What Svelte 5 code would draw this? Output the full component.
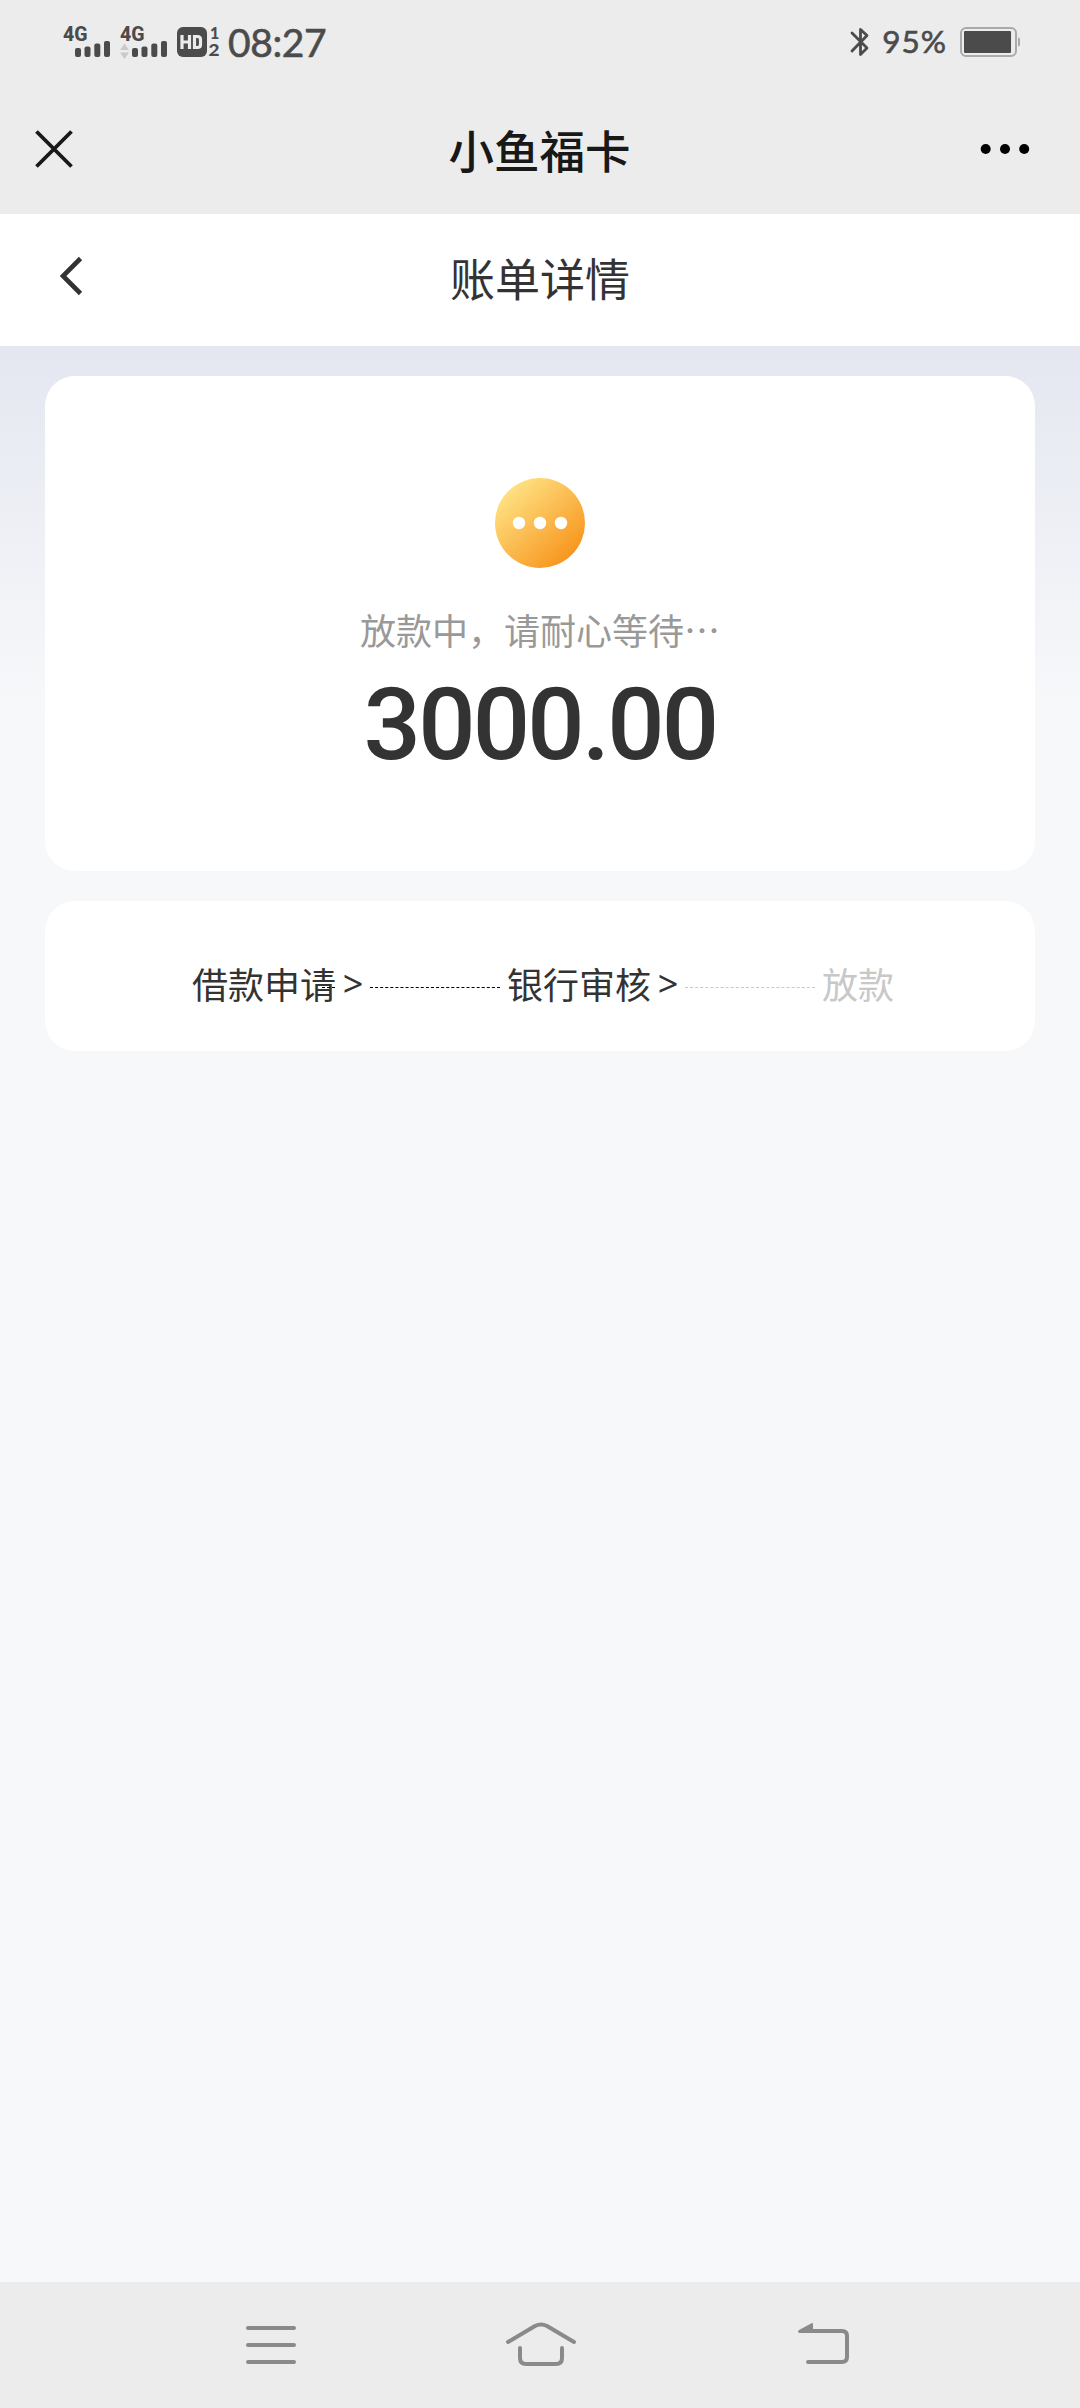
<script lang="ts">
  interface Step {
    label: string;
    done: boolean;
  }

  const time = '08:27';
  const battery = 95;
  const amount = '3000.00';

  const steps: Step[] = [
    { label: '借款申请', done: true },
    { label: '银行审核', done: true },
    { label: '放款', done: false },
  ];
</script>

<div class="screen">
  <div class="status-bar">
    <div class="status-left">
      <svg class="signal" width="48" height="34" viewBox="0 0 48 34">
        <text x="0" y="15" textLength="24.500" lengthAdjust="spacingAndGlyphs">4G</text>
        <rect x="12" y="22" width="6" height="9" rx="2" />
        <rect x="21.5" y="20.5" width="6" height="10.5" rx="2" />
        <rect x="31.300" y="17.500" width="6" height="13.500" rx="2" />
        <rect x="41" y="15" width="6" height="16" rx="2" />
      </svg>
      <svg class="signal second" width="48" height="34" viewBox="0 0 48 34">
        <text x="0" y="15" textLength="24.500" lengthAdjust="spacingAndGlyphs">4G</text>
        <path class="arrows" d="M0 24L4.500 17.500L9 24ZM0 26.500L4.500 33L9 26.500Z" />
        <rect x="12" y="22" width="6" height="9" rx="2" />
        <rect x="21.5" y="20.5" width="6" height="10.5" rx="2" />
        <rect x="31.300" y="17.500" width="6" height="13.500" rx="2" />
        <rect x="41" y="15" width="6" height="16" rx="2" />
      </svg>
      <svg class="hd" width="44" height="34" viewBox="0 0 44 34">
        <rect x="0" y="2" width="30" height="30" rx="6" />
        <path d="M5 10V24M12.500 10V24M5 17H12.500" stroke="#ececec" stroke-width="3.200" fill="none" />
        <path d="M17.500 11.500H20.500Q23.500 11.500 23.500 14.500V19.500Q23.500 22.500 20.500 22.500H17.500Z" stroke="#ececec" stroke-width="3.200" fill="none" />
        <text x="33" y="13.500" class="sim">1</text>
        <text x="31.500" y="31" class="sim" textLength="11" lengthAdjust="spacingAndGlyphs">2</text>
      </svg>
      <span class="time">{time}</span>
    </div>
    <div class="status-right">
      <svg width="20" height="30" viewBox="0 0 20 30" fill="none" stroke="#4b4b4b" stroke-width="2.800" stroke-linecap="round" stroke-linejoin="round">
        <path d="M2 6L17 21L10.500 27.500V2.500L17 8.500L2 24" />
      </svg>
      <span class="battery-text">{battery}%</span>
      <svg width="60" height="30" viewBox="0 0 60 30">
        <rect x="1" y="1" width="55" height="28" rx="5" fill="none" stroke="#aaa" stroke-width="2" />
        <rect x="4" y="4" width={(battery / 100) * 49.5} height="22" rx="1" fill="#4b4b4b" />
        <path d="M58 10.500Q60 10.500 60 12.500V17.500Q60 19.500 58 19.500Z" fill="#aaa" />
      </svg>
    </div>
  </div>

  <div class="title-bar">
    <svg class="close" width="38" height="38" viewBox="0 0 38 38">
      <path d="M1.500 1.500L36.500 36.500M36.500 1.500L1.500 36.500" stroke="#181818" stroke-width="3.800" />
    </svg>
    <h1>小鱼福卡</h1>
    <svg class="more" width="50" height="12" viewBox="0 0 50 12">
      <circle cx="5.700" cy="6" r="5" />
      <circle cx="25" cy="6" r="5" />
      <circle cx="44.200" cy="6" r="5" />
    </svg>
  </div>

  <header class="page-header">
    <svg class="back" width="24" height="40" viewBox="0 0 24 40">
      <path d="M20.500 2.500L3 20L20.500 37.500" fill="none" stroke="#333" stroke-width="4.600" />
    </svg>
    <h2>账单详情</h2>
  </header>

  <main>
    <section class="card summary">
      <svg width="90" height="90" viewBox="0 0 90 90">
        <defs>
          <linearGradient id="pending" x1="0.12" y1="0.1" x2="0.85" y2="0.9">
            <stop offset="0" stop-color="#ffe487" />
            <stop offset="1" stop-color="#f7941b" />
          </linearGradient>
        </defs>
        <circle cx="45" cy="45" r="45" fill="url(#pending)" />
        <g fill="#fff">
          <circle cx="24" cy="45" r="6.200" />
          <circle cx="45" cy="45" r="6.200" />
          <circle cx="66" cy="45" r="6.200" />
        </g>
      </svg>
      <p class="hint">放款中，请耐心等待…</p>
      <p class="amount">{amount}</p>
    </section>

    <section class="card steps">
      {#each steps as step, i}
        {#if i > 0}
          <span class="line" class:pending={!step.done}></span>
        {/if}
        <span class="step" class:pending={!step.done} class:first={i === 0}>{step.label}</span>
        {#if i < steps.length - 1}
          <span class="arrow">&gt;</span>
        {/if}
      {/each}
    </section>
  </main>

  <nav>
    <svg width="70" height="50" viewBox="0 0 70 50">
      <path d="M12 8H58M12 25H58M12 42H58" />
    </svg>
    <svg class="home" width="74" height="50" viewBox="0 0 74 50">
      <path d="M4 22L31 6Q37 3 43 6L70 22M16 28V38Q16 44 22 44H52Q58 44 58 38V28" />
    </svg>
    <svg width="70" height="50" viewBox="0 0 70 50">
      <path d="M15 11H54Q59 11 59 16V37Q59 42 54 42H20" />
      <path class="tip" d="M10 11.500Q10 10.500 11.500 9.800L23.500 3.200Q25 2.500 25 4V13H12Q10 13 10 11.500Z" />
    </svg>
  </nav>
</div>

<style>
  :global(body) {
    margin: 0;
  }

  .screen {
    display: flex;
    flex-direction: column;
    width: 1080px;
    height: 2408px;
    background: #f7f8fa;
    font-family: "Noto Sans CJK SC", sans-serif;
    color: #333;
  }

  svg {
    display: block;
    flex-shrink: 0;
  }

  h1,
  h2,
  p {
    margin: 0;
  }

  .status-bar {
    display: flex;
    justify-content: space-between;
    align-items: center;
    height: 84px;
    padding: 0 60px 0 63px;
    box-sizing: border-box;
    background: #ececec;
    color: #4b4b4b;
    font-family: Lato, sans-serif;
  }

  .status-left,
  .status-right {
    display: flex;
    align-items: center;
  }

  .signal,
  .hd {
    fill: #4b4b4b;
    font-family: Roboto, sans-serif;
    font-weight: 800;
    font-size: 21px;
    overflow: visible;
  }

  .signal {
    margin-top: 14px;
    margin-bottom: 12px;
  }

  .second {
    margin-left: 9px;
  }

  .arrows {
    fill: #cacaca;
  }

  .hd {
    margin-left: 9px;
  }

  .sim {
    font-family: Lato, sans-serif;
    font-size: 16px;
    font-weight: 900;
  }

  .time {
    margin-left: 7px;
    font-size: 39px;
    line-height: 42px;
    letter-spacing: -0.4px;
    -webkit-text-stroke: 0.6px #4b4b4b;
  }

  .battery-text {
    margin: 0 13px 2px 12px;
    font-size: 31.5px;
    line-height: 36px;
    letter-spacing: 1px;
    -webkit-text-stroke: 0.6px #4b4b4b;
  }

  .title-bar,
  .page-header {
    display: grid;
    grid-template-columns: 1fr auto 1fr;
    align-items: center;
    box-sizing: border-box;
  }

  .title-bar {
    height: 130px;
    padding: 0 50px 0 35px;
    background: #ececec;
  }

  .title-bar h1 {
    margin-left: 14px;
    color: #181818;
    font-size: 45.5px;
    font-weight: 500;
    line-height: 64px;
  }

  .more {
    justify-self: end;
  }

  .page-header {
    height: 132px;
    padding: 0 60px;
    background: #fff;
  }

  .back {
    margin-bottom: 9px;
  }

  .page-header h2 {
    margin-bottom: 4px;
    font-size: 45px;
    font-weight: 400;
    line-height: 64px;
  }

  main {
    flex: 1;
    display: flex;
    flex-direction: column;
    gap: 30px;
    padding: 30px 45px;
    background: linear-gradient(#e4e7f0, #f7f8fa 360px);
  }

  .card {
    border-radius: 30px;
    background: #fff;
  }

  .summary {
    display: flex;
    flex-direction: column;
    align-items: center;
    height: 495px;
    padding-top: 102px;
    box-sizing: border-box;
  }

  .hint {
    margin-top: 34px;
    font-size: 36px;
    line-height: 54px;
    color: #999;
  }

  .amount {
    margin-top: 9px;
    font-family: Roboto, sans-serif;
    font-size: 101px;
    font-weight: 500;
    line-height: 120px;
    letter-spacing: -2.8px;
  }

  .steps {
    display: flex;
    align-items: center;
    height: 150px;
    padding: 13px 0 0 147px;
    box-sizing: border-box;
    font-size: 36px;
    line-height: 54px;
  }

  .step {
    position: relative;
    white-space: nowrap;
  }

  .step.pending {
    color: #c8c8c8;
  }

  .first::after {
    content: "";
    position: absolute;
    right: 1px;
    top: 31px;
    width: 13px;
    border-top: 1px dashed #000;
  }

  .arrow {
    width: 34px;
    margin-top: 2px;
    text-align: center;
    font-family: "Noto Sans", sans-serif;
  }

  .line {
    width: 130px;
    margin: 9px 7px 0 0;
    border-top: 1px dashed #000;
  }

  .line.pending {
    border-color: #c8c8c8;
  }

  nav {
    display: flex;
    align-items: flex-start;
    height: 126px;
    padding: 38px 0 0 236px;
    box-sizing: border-box;
    background: #ececec;
  }

  nav svg {
    fill: none;
    stroke: #8a8a8a;
    stroke-width: 4;
    stroke-linecap: round;
    stroke-linejoin: round;
  }

  .home {
    margin: 0 210px 0 198px;
  }

  nav .tip {
    fill: #8a8a8a;
    stroke: none;
  }
</style>
